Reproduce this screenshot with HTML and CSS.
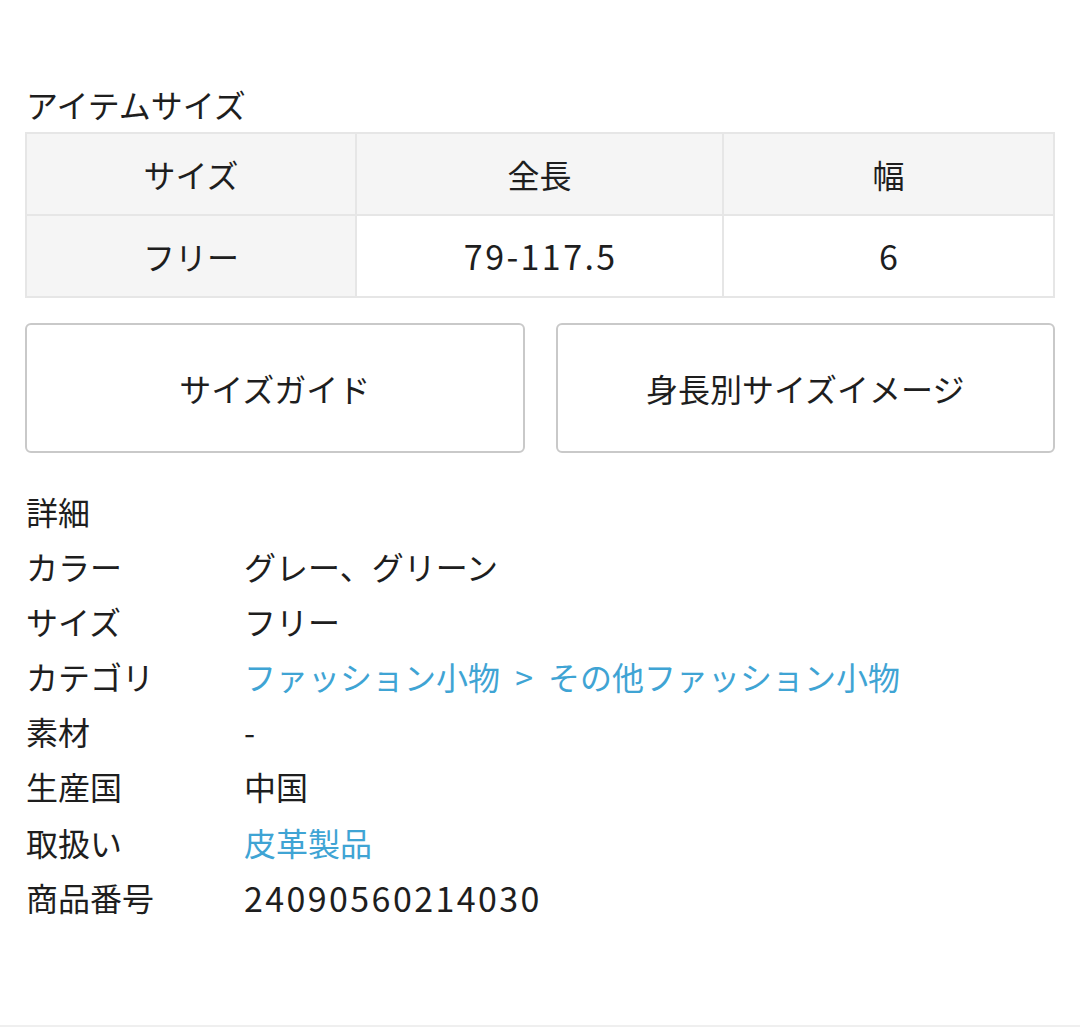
FILE: index.html
```html
<!DOCTYPE html>
<html lang="ja">
<head>
<meta charset="utf-8">
<title>アイテムサイズ</title>
<link rel="stylesheet" href="styles.css">
</head>
<body>
<div class="page">
  <h2 class="title">アイテムサイズ</h2>
  <div class="size-table">
    <div class="cell head">サイズ</div>
    <div class="cell head">全長</div>
    <div class="cell head">幅</div>
    <div class="cell head">フリー</div>
    <div class="cell"><span class="num">79-117.5</span></div>
    <div class="cell"><span class="num">6</span></div>
  </div>
  <div class="buttons">
    <div class="btn">サイズガイド</div>
    <div class="btn">身長別サイズイメージ</div>
  </div>
  <div class="details">
    <div class="details-title">詳細</div>
    <div class="row"><div class="label">カラー</div><div class="value">グレー、グリーン</div></div>
    <div class="row"><div class="label">サイズ</div><div class="value">フリー</div></div>
    <div class="row"><div class="label">カテゴリ</div><div class="value link">ファッション小物 &gt; その他ファッション小物</div></div>
    <div class="row"><div class="label">素材</div><div class="value">-</div></div>
    <div class="row"><div class="label">生産国</div><div class="value">中国</div></div>
    <div class="row"><div class="label">取扱い</div><div class="value link">皮革製品</div></div>
    <div class="row"><div class="label">商品番号</div><div class="value"><span class="num">24090560214030</span></div></div>
  </div>
</div>
</body>
</html>
```
FILE: styles.css
```css
html, body {
  margin: 0;
  padding: 0;
  background: #fff;
}
body {
  font-family: "Noto Sans CJK JP", "Noto Sans", sans-serif;
  color: #1e1e1e;
  font-size: 32px;
}
.page {
  padding: 84px 25px 0 25px;
  height: 1027px;
  box-sizing: border-box;
  border-bottom: 2px solid #efefef;
}
.title {
  margin: 0 0 8px 1px;
  font-size: 32px;
  font-weight: 400;
  line-height: 40px;
}
.size-table {
  display: grid;
  grid-template-columns: 328px 365px 329px;
  grid-auto-rows: 80px;
  gap: 2px;
  padding: 2px;
  background: #e6e6e6;
  width: 1030px;
  box-sizing: border-box;
}
.cell {
  background: #fff;
  display: flex;
  align-items: center;
  justify-content: center;
  line-height: 1;
}
.cell.head {
  background: #f5f5f5;
}
.num {
  font-size: 34px;
  letter-spacing: 2.4px;
}
.cell .num {
  margin-right: -2.4px;
}
.buttons {
  display: grid;
  grid-template-columns: 1fr 1fr;
  gap: 31px;
  margin-top: 25px;
}
.btn {
  height: 130px;
  box-sizing: border-box;
  border: 2px solid #c9c9c9;
  border-radius: 6px;
  display: flex;
  align-items: center;
  justify-content: center;
  background: #fff;
}
.details {
  margin-top: 31px;
  padding-left: 1px;
}
.details-title,
.row {
  line-height: 55.1px;
  height: 55.1px;
}
.row {
  display: flex;
}
.label {
  width: 218px;
  flex: none;
}
.link {
  color: #3fa4d4;
  word-spacing: 8px;
}
```
